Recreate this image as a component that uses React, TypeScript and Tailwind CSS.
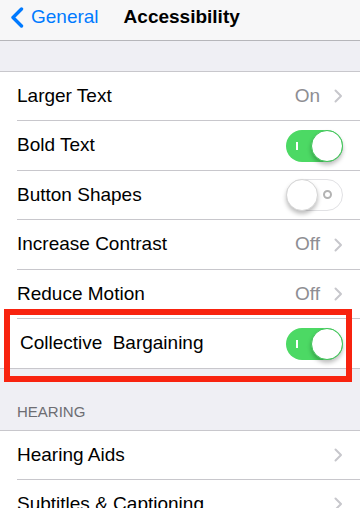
import React from "react";

function Chevron() {
  return (
    <svg width="9" height="14" viewBox="0 0 9 14" className="ml-[14px]">
      <path d="M1.5 1.5 L7 7 L1.5 12.5" fill="none" stroke="#c7c7cc" strokeWidth="2" strokeLinecap="round" strokeLinejoin="round" />
    </svg>
  );
}

function Toggle({ on }: { on: boolean }) {
  if (on) {
    return (
      <div className="relative h-[32px] w-[57px] rounded-full bg-[#4cd964]">
        <span className="absolute left-[10px] top-[12px] h-[8px] w-[2px] bg-white" />
        <span className="absolute right-0 top-0 h-[32px] w-[32px] rounded-full border border-[#3ec457] bg-white shadow-[0_3px_4px_rgba(0,0,0,0.25)]" />
      </div>
    );
  }
  return (
    <div className="relative h-[32px] w-[57px] rounded-full border-[1.5px] border-[#e1e1e4] bg-white">
      <span className="absolute right-[10px] top-[10px] h-[9px] w-[9px] rounded-full border-2 border-[#b3b3b3]" />
      <span className="absolute -left-[1.5px] -top-[1.5px] h-[32px] w-[32px] rounded-full border border-[#d6d6d6] bg-white shadow-[0_3px_4px_rgba(0,0,0,0.25)]" />
    </div>
  );
}

type RowProps = {
  label: string;
  value?: string;
  chevron?: boolean;
  toggle?: boolean;
  last?: boolean;
  spaced?: boolean;
  tall?: boolean;
};

function Row({ label, value, chevron, toggle, last, spaced, tall }: RowProps) {
  return (
    <div className="bg-white pl-[17px]">
      <div
        className={`flex items-center justify-between pr-[17px] ${tall ? "h-[50px]" : "h-[49px]"} ${
          last ? "" : "border-b border-[#c8c7cc]"
        }`}
      >
        <span className={`text-[19px] text-black ${spaced ? "pl-[3px] [word-spacing:5px]" : ""}`}>{label}</span>
        <div className="flex items-center">
          {value && <span className="text-[19px] text-[#8e8e93]">{value}</span>}
          {chevron && <Chevron />}
          {toggle !== undefined && <Toggle on={toggle} />}
        </div>
      </div>
    </div>
  );
}

export default function App() {
  return (
    <div className="relative h-[508px] w-[360px] overflow-hidden bg-[#efeff4] font-['Liberation_Sans',Arial,sans-serif]">
      <div className="flex h-[41px] items-start border-b border-[#b6b6ba] bg-[#f7f7f8] pt-[6px]">
        <svg width="15" height="21" viewBox="0 0 15 21" className="ml-[9px] mt-[1px]">
          <path d="M12.5 2 L4 10.5 L12.5 19" fill="none" stroke="#007aff" strokeWidth="3.4" strokeLinecap="round" strokeLinejoin="round" />
        </svg>
        <span className="ml-[7px] text-[19px] leading-[22px] text-[#007aff]">General</span>
        <span className="ml-[25px] text-[19px] font-bold leading-[22px] text-black">Accessibility</span>
      </div>

      <div className="h-[31px] border-b border-[#c8c7cc]" />

      <Row label="Larger Text" value="On" chevron />
      <Row label="Bold Text" toggle={true} tall />
      <Row label="Button Shapes" toggle={false} />
      <Row label="Increase Contrast" value="Off" chevron tall />
      <Row label="Reduce Motion" value="Off" chevron />
      <div className="border-b border-[#c8c7cc]">
        <Row label="Collective Bargaining" toggle={true} last spaced />
      </div>

      <div className="flex h-[62px] items-end border-b border-[#c8c7cc] pb-[9px] pl-[17px]">
        <span className="text-[15px] leading-[18px] text-[#6d6d72]">HEARING</span>
      </div>

      <Row label="Hearing Aids" chevron />
      <Row label="Subtitles & Captioning" chevron />

      <div className="pointer-events-none absolute left-[4px] top-[309px] h-[73px] w-[348px] border-[6px] border-[#f8230f]" />
    </div>
  );
}
